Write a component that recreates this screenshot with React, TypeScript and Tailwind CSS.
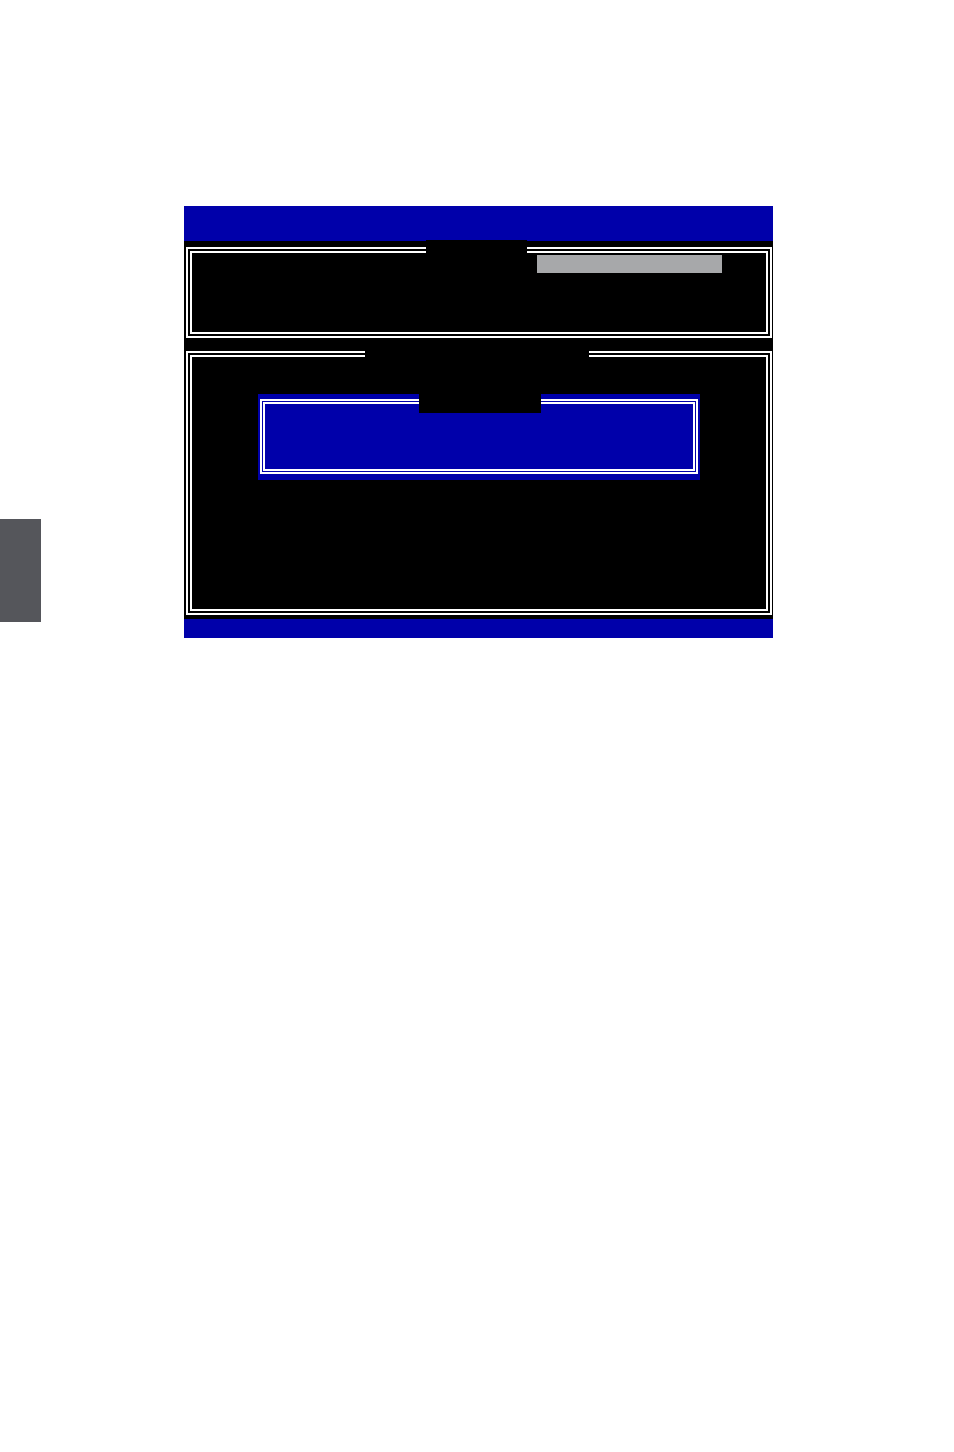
import React from 'react';

// Framed BIOS panel: white double rule on black, with a title notch cut into the top edge
const Panel: React.FC<{
  height: string;
  notch: string;
  className?: string;
  children?: React.ReactNode;
}> = ({ height, notch, className = '', children }) => (
  <div className={`relative border-[6px] border-double border-white bg-black ${height} ${className}`}>
    <div className={`absolute bg-black ${notch}`} />
    {children}
  </div>
);

const BiosScreen: React.FC = () => (
  <div className="flex w-[589px] flex-col bg-black">
    <div className="h-[35px] bg-[#0000aa]" />

    <div className="flex flex-col pt-[6px] pb-[4px] pl-[2px] pr-[1px]">
      <Panel height="h-[91px]" notch="-top-[13px] left-[234px] h-[19px] w-[101px]">
        <div className="ml-[345px] mt-[2px] h-[18px] w-[185px] bg-[#a7a8aa]" />
      </Panel>

      <Panel height="h-[264px]" notch="-top-[6px] left-[173px] h-[12px] w-[224px]" className="mt-[13px]">
        <div className="relative ml-[66px] mt-[37px] flex h-[86px] w-[442px] flex-col bg-[#0000aa] pt-[5px] pb-[6px] px-[2px]">
          <div className="absolute left-[161px] top-0 h-[19px] w-[122px] bg-black" />
          <div className="flex-1 border-[5px] border-double border-white" />
        </div>
      </Panel>
    </div>

    <div className="h-[19px] bg-[#0000aa]" />
  </div>
);

export default function App() {
  return (
    <div className="min-h-[1452px] w-full bg-white font-['Liberation_Sans',sans-serif]">
      <div className="flex items-start pt-[206px]">
        <div className="mt-[313px] h-[103px] w-[41px] bg-[#55565b]" />
        <div className="ml-[143px]">
          <BiosScreen />
        </div>
      </div>
    </div>
  );
}
